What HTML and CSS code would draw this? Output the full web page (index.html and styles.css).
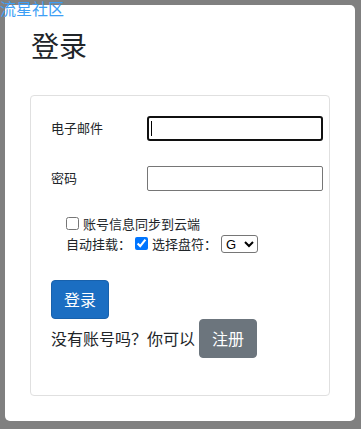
FILE: index.html
```html
<!DOCTYPE html>
<html lang="zh-CN">
<head>
<meta charset="utf-8">
<title>登录 - 流星社区</title>
<link rel="stylesheet" href="styles.css">
</head>
<body>
<div class="brand">流星社区</div>
<div class="panel">
  <h1 class="title">登录</h1>
  <div class="card">
    <div class="fields">
      <label class="label" for="email">电子邮件</label>
      <div class="input-wrap">
        <input id="email" class="input input-focus" type="text">
        <span class="caret"></span>
      </div>
      <label class="label" for="pwd">密码</label>
      <div class="input-wrap">
        <input id="pwd" class="input" type="password">
      </div>
    </div>
    <div class="options">
      <div class="opt-row">
        <input type="checkbox" class="check" id="sync">
        <label for="sync">账号信息同步到云端</label>
      </div>
      <div class="opt-row">
        <span>自动挂载：</span>
        <input type="checkbox" class="check" id="mount" checked>
        <label for="mount">选择盘符：</label>
        <select class="drive"><option>G</option></select>
      </div>
    </div>
    <div class="actions">
      <button class="btn btn-primary" type="button">登录</button>
      <div class="register-row">
        <span>没有账号吗？你可以</span>
        <button class="btn btn-secondary" type="button">注册</button>
      </div>
    </div>
  </div>
</div>
</body>
</html>
```
FILE: styles.css
```css
html, body {
  margin: 0;
  padding: 0;
}
body {
  background: #808080;
  font-family: "Noto Sans CJK SC", "Liberation Sans", sans-serif;
  color: #212529;
  padding: 5px;
  height: 429px;
  box-sizing: border-box;
  overflow: hidden;
}
.brand {
  position: absolute;
  left: 0;
  top: 0;
  font-size: 16px;
  line-height: 16px;
  color: #3d9ef5;
  z-index: 2;
}
.panel {
  width: 350px;
  height: 416px;
  box-sizing: border-box;
  background: #fff;
  border-radius: 5px;
  padding: 24px 25px 25px;
}
.title {
  margin: 0 0 32px 1px;
  font-size: 28px;
  font-weight: 400;
  line-height: 1.2;
}
.card {
  width: 300px;
  height: 301px;
  box-sizing: border-box;
  border: 1px solid #e0e0e0;
  border-radius: 4px;
  padding: 20px 20px 0;
}
.fields {
  display: grid;
  grid-template-columns: 96px 176px;
  grid-auto-rows: 25px;
  row-gap: 25px;
  align-items: center;
}
.label {
  font-size: 13px;
  line-height: 18px;
}
.input-wrap {
  position: relative;
  height: 25px;
}
.input {
  display: block;
  width: 176px;
  height: 25px;
  box-sizing: border-box;
  margin: 0;
  border: 1px solid #767676;
  border-radius: 2px;
  background: #fff;
  outline: none;
  padding: 0 3px;
  font-size: 13px;
}
.input-focus {
  border: 2px solid #101010;
  border-radius: 3px;
}
.caret {
  position: absolute;
  left: 4px;
  top: 5px;
  width: 1px;
  height: 15px;
  background: #000;
}
.options {
  margin-top: 23px;
  padding-left: 15px;
  font-size: 13px;
}
.opt-row {
  display: flex;
  align-items: center;
  height: 20px;
  line-height: 20px;
}
.check {
  width: 13px;
  height: 13px;
  margin: 0 4px 0 0;
}
.opt-row span + .check {
  margin-left: 4px;
}
.drive {
  margin-left: 4px;
  width: 37px;
  height: 18px;
  font-family: "Liberation Sans", sans-serif;
  font-size: 13px;
  padding: 0;
  border: 1px solid #767676;
  border-radius: 3px;
  background: #fff;
  color: #000;
}
.actions {
  margin-top: 26px;
}
.btn {
  display: inline-block;
  box-sizing: border-box;
  height: 39px;
  padding: 6px 12px;
  font-family: "Noto Sans CJK SC", sans-serif;
  font-size: 16px;
  line-height: 25px;
  border-radius: 4px;
  border: 1px solid transparent;
  color: #fff;
  cursor: pointer;
}
.btn-primary {
  background: #1b6ec2;
  border-color: #1861ac;
}
.btn-secondary {
  background: #6c757d;
  border-color: #6c757d;
}
.register-row {
  display: flex;
  align-items: center;
  gap: 4px;
  font-size: 16px;
}
```
